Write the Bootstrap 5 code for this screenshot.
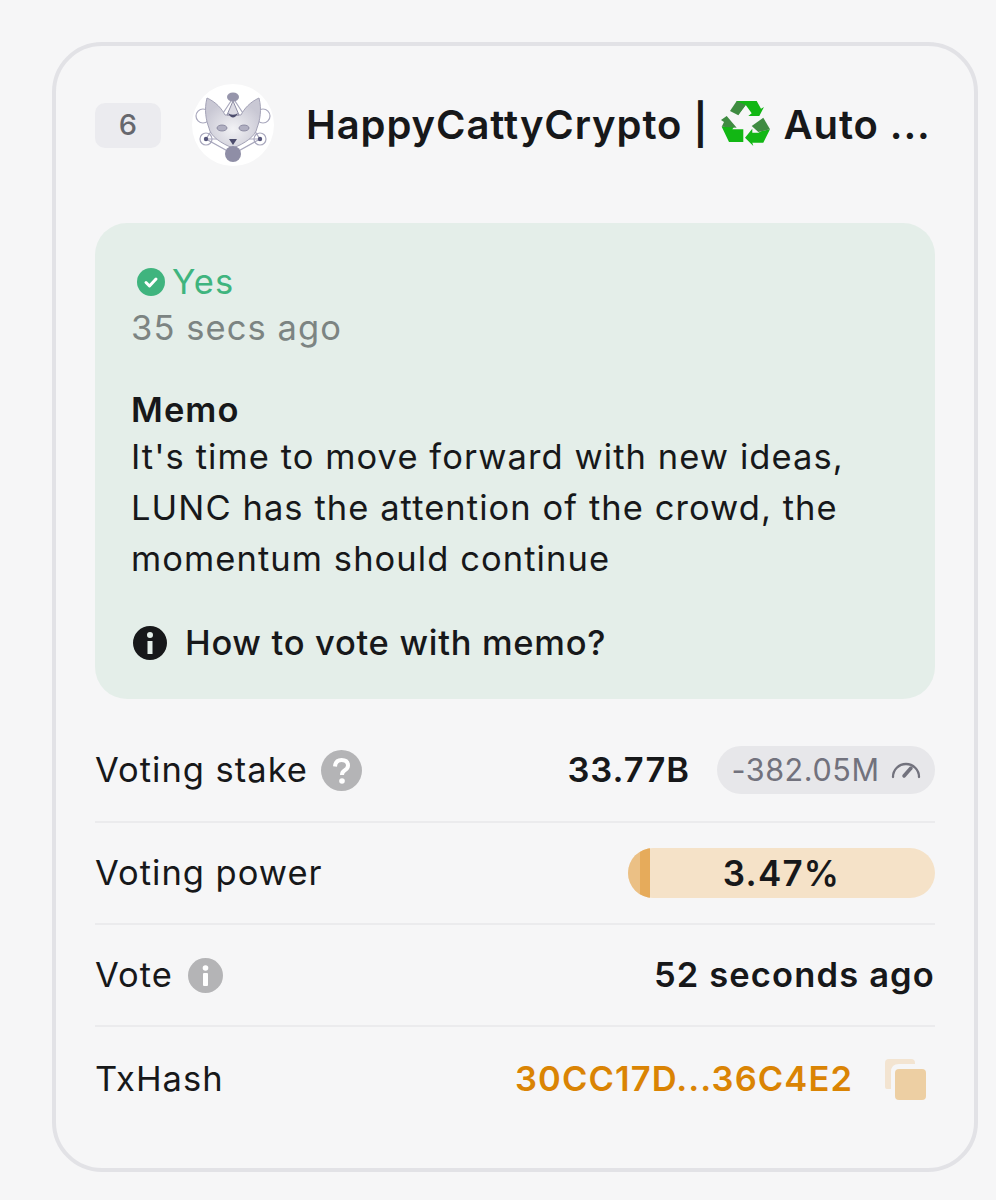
<!DOCTYPE html>
<html lang="en">
<head>
<meta charset="utf-8">
<title>Vote card</title>
<link href="https://cdn.jsdelivr.net/npm/bootstrap@5.3.0/dist/css/bootstrap.min.css" rel="stylesheet">
<style>
html,body{background:#f6f6f7;}
body{font-family:"Inter","Liberation Sans",sans-serif;color:#17181a;padding:42px 18px 0 52px;height:1200px;overflow:hidden;letter-spacing:1px;}
.vote-card{height:1130px;background:#f6f6f7;border:4px solid #e2e2e6;border-radius:50px;padding:38px 39px 0 39px;}
.rank-tag{width:66px;height:45px;background:#ebebef;border-radius:10px;color:#66676d;font-size:29px;font-weight:500;flex:none;letter-spacing:0;}
.ava{width:82px;height:82px;flex:none;margin-left:31px;margin-right:32px;}
.val-name{font-size:40px;font-weight:600;line-height:82px;white-space:nowrap;letter-spacing:.9px;}
.val-name svg{width:49px;height:46px;vertical-align:-8px;margin:0 3px 0 1px;}
.memo-box{margin-top:57px;margin-bottom:20px;height:476px;background:#e4eee9;border-radius:32px;padding:36px 36px 0 36px;font-size:34.5px;line-height:51px;letter-spacing:1.07px;}
.yes-line{color:#3fb47e;height:46px;line-height:46px;padding-left:6px;gap:7px;}
.time-ago{color:#7c8482;line-height:46px;margin-bottom:38px;}
.memo-title{font-weight:600;line-height:42px;}
.memo-link{margin-top:33px;font-weight:500;gap:16px;letter-spacing:.7px;}
.info-row{height:102px;border-bottom:2px solid #ebebed;font-size:34.5px;}
.info-row:last-child{border-bottom:0;height:104px;}
.first-row{height:104px;}
.label-set{gap:13px;}
.vote-ico{margin-left:2px;}
.strong-val{font-weight:600;}
.wide-val{letter-spacing:1.15px;}
.drop-pill{width:218px;height:48px;background:#e7e7ea;border-radius:24px;color:#72727d;font-size:30.5px;margin-left:27px;gap:11px;letter-spacing:.6px;font-weight:400;}
.power-bar{width:307px;height:50px;background:#f5e2c8;border-radius:25px;overflow:hidden;font-weight:600;font-size:35px;letter-spacing:1.2px;}
.power-fill{left:0;top:0;bottom:0;width:22px;background:linear-gradient(90deg,#ebc085 0,#ebc085 12px,#e6ab5b 12px);}
.power-num{z-index:1;}
.hash-link{color:#da8404;font-weight:600;font-size:34.5px;letter-spacing:1.1px;text-decoration:none;}
.copy-ico{width:42px;height:42px;margin-left:31px;margin-right:9px;}
</style>
</head>
<body>
<div class="vote-card">
  <div class="d-flex align-items-center">
    <div class="rank-tag d-flex align-items-center justify-content-center">6</div>
    <svg class="ava" viewBox="0 0 82 82" aria-hidden="true">
      <defs><radialGradient id="face" cx=".5" cy=".62" r=".55"><stop offset="0" stop-color="#f2f2f5"/><stop offset="1" stop-color="#c9c8d4"/></radialGradient></defs>
      <circle cx="41" cy="41" r="41" fill="#fff"/>
      <g fill="none" stroke="#a9a8bd" stroke-width="1.2">
        <circle cx="11" cy="32" r="7"/><circle cx="71" cy="32" r="7"/>
        <path d="M14 55 41 14 68 55 41 70Z"/><path d="M14 55H68"/>
        <circle cx="14" cy="55" r="6"/><circle cx="68" cy="55" r="6"/>
      </g>
      <path d="M15 14C24 18 30 25 33 31H49C52 25 58 18 67 14 70 26 68 36 65 44 64 52 52 60 41 64 30 60 18 52 17 44 14 36 12 26 15 14Z" fill="url(#face)" stroke="#a3a2b6" stroke-width="1"/>
      <path d="M35 31 41 17 47 31Z" fill="#dcdbe4" stroke="#8f8ea6"/>
      <ellipse cx="41" cy="13" rx="6" ry="4.500" fill="#9695ab"/>
      <path d="M36 29Q41 38 46 29Q41 33 36 29Z" fill="#4c4c6c"/>
      <ellipse cx="30" cy="44" rx="5" ry="3" fill="#b0afc1" stroke="#7f7e97" stroke-width=".8"/>
      <ellipse cx="52" cy="44" rx="5" ry="3" fill="#b0afc1" stroke="#7f7e97" stroke-width=".8"/>
      <path d="M37 55H45L41 61Z" fill="#4c4c6c"/>
      <circle cx="41" cy="70" r="8" fill="#8f8ea6"/>
      <circle cx="14" cy="55" r="2.200" fill="#55557a"/><circle cx="68" cy="55" r="2.200" fill="#55557a"/>
    </svg>
    <div class="val-name">HappyCattyCrypto | <svg viewBox="0 0 49 46" aria-hidden="true">
      <polygon points="15.700,0 35.700,0 40,7.700 43,6 38.300,15 27.300,15 30.700,12.300 24.700,4 17,14" fill="#12b714"/>
      <polygon points="15.700,0 9,10 17.300,14.300 24.700,4" fill="#3f8b41"/>
      <polygon points=".7,25.700 8,41 22.300,41 22.300,28.300 11.300,28.300 13,26" fill="#12b714"/>
      <polygon points="5.700,15 15.700,26.700 .7,25.700 3,21 0,19" fill="#3f8b41"/>
      <polygon points="49,28.300 42.300,41.700 31.300,41.700 32.300,45 24,36.700 31.300,27.700 31.300,31.700 37.300,31.700 40.700,30" fill="#12b714"/>
      <polygon points="42.300,16.700 30.700,25 37.300,31 49,28.300" fill="#3f8b41"/>
    </svg> Auto ...</div>
  </div>

  <div class="memo-box">
    <div class="yes-line d-flex align-items-center">
      <svg width="28" height="28" viewBox="0 0 28 28" aria-hidden="true"><circle cx="14" cy="14" r="14" fill="#3fb47e"/><path d="M9 14.500 12.500 18 19 11" fill="none" stroke="#fff" stroke-width="3" stroke-linecap="round" stroke-linejoin="round"/></svg>
      <span>Yes</span>
    </div>
    <div class="time-ago">35 secs ago</div>
    <div class="memo-title">Memo</div>
    <div>It's time to move forward with new ideas,<br>LUNC has the attention of the crowd, the<br>momentum should continue</div>
    <div class="memo-link d-flex align-items-center">
      <svg width="38" height="38" viewBox="0 0 38 38" aria-hidden="true"><path fill-rule="evenodd" d="M19 2a17 17 0 1 0 0 34 17 17 0 0 0 0-34Zm0 6a3 3 0 1 1 0 6 3 3 0 0 1 0-6Zm-2.500 9h5v13h-5Z" fill="#17181a"/></svg>
      <span>How to vote with memo?</span>
    </div>
  </div>

  <div class="info-row first-row d-flex align-items-center justify-content-between">
    <div class="label-set d-flex align-items-center">Voting stake
      <svg width="41" height="41" viewBox="0 0 41 41" aria-hidden="true"><circle cx="20.500" cy="20.500" r="20.500" fill="#b4b4b6"/><path d="M14 16.500Q14.500 10 20.500 10 27 10 27 15.500 27 18.500 23.500 20.500 21 22 21 25" fill="none" stroke="#fff" stroke-width="4"/><circle cx="21" cy="31" r="2.800" fill="#fff"/></svg>
    </div>
    <div class="d-flex align-items-center">
      <span class="strong-val">33.77B</span>
      <span class="drop-pill d-flex align-items-center justify-content-center">-382.05M
        <svg width="30" height="20" viewBox="0 0 30 20" aria-hidden="true"><path d="M2 17A13 13 0 0 1 28 17" fill="none" stroke="#72727d" stroke-width="2.300" stroke-linecap="round"/><path d="M13 16 20 8" stroke="#72727d" stroke-width="3.500" stroke-linecap="round"/></svg>
      </span>
    </div>
  </div>

  <div class="info-row d-flex align-items-center justify-content-between">
    <div>Voting power</div>
    <div class="power-bar position-relative d-flex align-items-center justify-content-center">
      <div class="power-fill position-absolute"></div>
      <span class="power-num position-relative">3.47%</span>
    </div>
  </div>

  <div class="info-row d-flex align-items-center justify-content-between">
    <div class="label-set d-flex align-items-center">Vote
      <svg class="vote-ico" width="35" height="35" viewBox="0 0 35 35" aria-hidden="true"><circle cx="17.500" cy="17.500" r="17.500" fill="#b4b4b6"/><circle cx="17.500" cy="10" r="2.800" fill="#fff"/><rect x="15" y="15" width="5" height="13" rx="1" fill="#fff"/></svg>
    </div>
    <div class="strong-val wide-val">52 seconds ago</div>
  </div>

  <div class="info-row d-flex align-items-center justify-content-between">
    <div>TxHash</div>
    <div class="d-flex align-items-center">
      <a class="hash-link" href="#">30CC17D...36C4E2</a>
      <svg class="copy-ico" viewBox="0 0 42 42" aria-hidden="true"><path d="M1 29V5Q1 1 5 1H27Q31 1 31 5V6H15Q7 6 7 14V31H3Q1 31 1 29Z" fill="#f3e4d1"/><rect x="11" y="11" width="31" height="31" rx="4" fill="#edcfa3"/></svg>
    </div>
  </div>
</div>
<script src="https://cdn.jsdelivr.net/npm/bootstrap@5.3.0/dist/js/bootstrap.bundle.min.js"></script>
</body>
</html>
